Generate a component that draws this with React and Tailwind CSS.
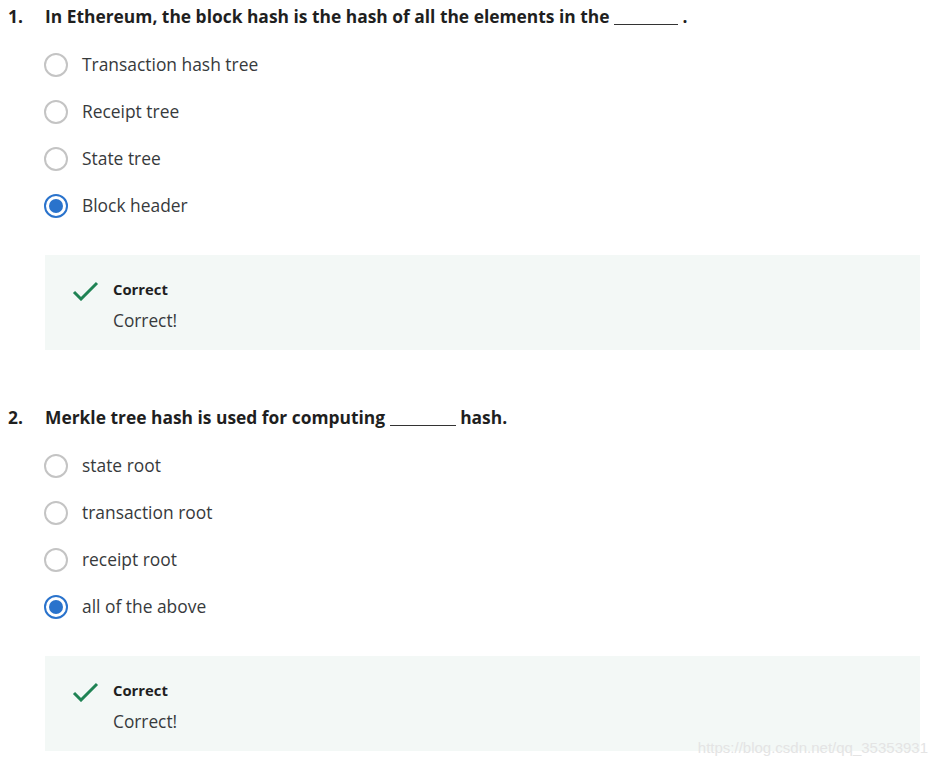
import React from "react";

const questions = [
  {
    num: "1.",
    text: (
      <>
        In Ethereum, the block hash is the hash of all the elements in the{" "}
        <span className="inline-block w-[64px] border-b-[1.5px] border-[#333] translate-y-[2px]"></span> .
      </>
    ),
    options: ["Transaction hash tree", "Receipt tree", "State tree", "Block header"],
    selected: 3,
  },
  {
    num: "2.",
    text: (
      <>
        Merkle tree hash is used for computing{" "}
        <span className="inline-block w-[66px] border-b-[1.5px] border-[#333] translate-y-[2px]"></span> hash.
      </>
    ),
    options: ["state root", "transaction root", "receipt root", "all of the above"],
    selected: 3,
  },
];

function Radio({ checked }) {
  if (checked) {
    return (
      <span className="flex h-[24px] w-[24px] shrink-0 items-center justify-center rounded-full border-2 border-[#2a73cc]">
        <span className="h-[14px] w-[14px] rounded-full bg-[#2a73cc]"></span>
      </span>
    );
  }
  return <span className="h-[24px] w-[24px] shrink-0 rounded-full border-2 border-[#c4c4c4]"></span>;
}

function Question({ q }) {
  return (
    <div>
      <div className="flex h-[32px] items-center text-[17.4px] font-bold text-[#1f1f1f]">
        <span className="w-[45px] pl-[8px]">{q.num}</span>
        <span>{q.text}</span>
      </div>
      <div className="mt-[9px] flex flex-col pl-[44px]">
        {q.options.map((opt, i) => (
          <div key={opt} className="flex h-[47px] items-center gap-[14px]">
            <Radio checked={i === q.selected} />
            <span className="text-[17.4px] text-[#373a3c]">{opt}</span>
          </div>
        ))}
      </div>
      <div className="ml-[45px] mr-[14px] mt-[26px] flex h-[95px] gap-[14px] bg-[#f3f8f6] pl-[27px] pt-[23px]">
        <svg width="27" height="20" viewBox="0 0 27 20" className="mt-[3px] shrink-0">
          <path d="M2 11 L9 18 L25 2" fill="none" stroke="#1f8354" strokeWidth="3" />
        </svg>
        <div>
          <div className="text-[14.8px] font-bold leading-[22px] text-[#1f1f1f]">Correct</div>
          <div className="mt-[9px] text-[17.3px] leading-[24px] text-[#373a3c]">Correct!</div>
        </div>
      </div>
    </div>
  );
}

export default function App() {
  return (
    <div
      className="relative h-[767px] w-[934px] overflow-hidden bg-white"
      style={{ fontFamily: '"Open Sans", sans-serif' }}
    >
      <div className="flex flex-col gap-[51px]">
        {questions.map((q) => (
          <Question key={q.num} q={q} />
        ))}
      </div>
      <div className="absolute bottom-[8px] right-[6px] text-[15px] text-[#e4e4e4]" style={{ fontFamily: '"Liberation Sans", sans-serif' }}>
        https://blog.csdn.net/qq_35353931
      </div>
    </div>
  );
}
